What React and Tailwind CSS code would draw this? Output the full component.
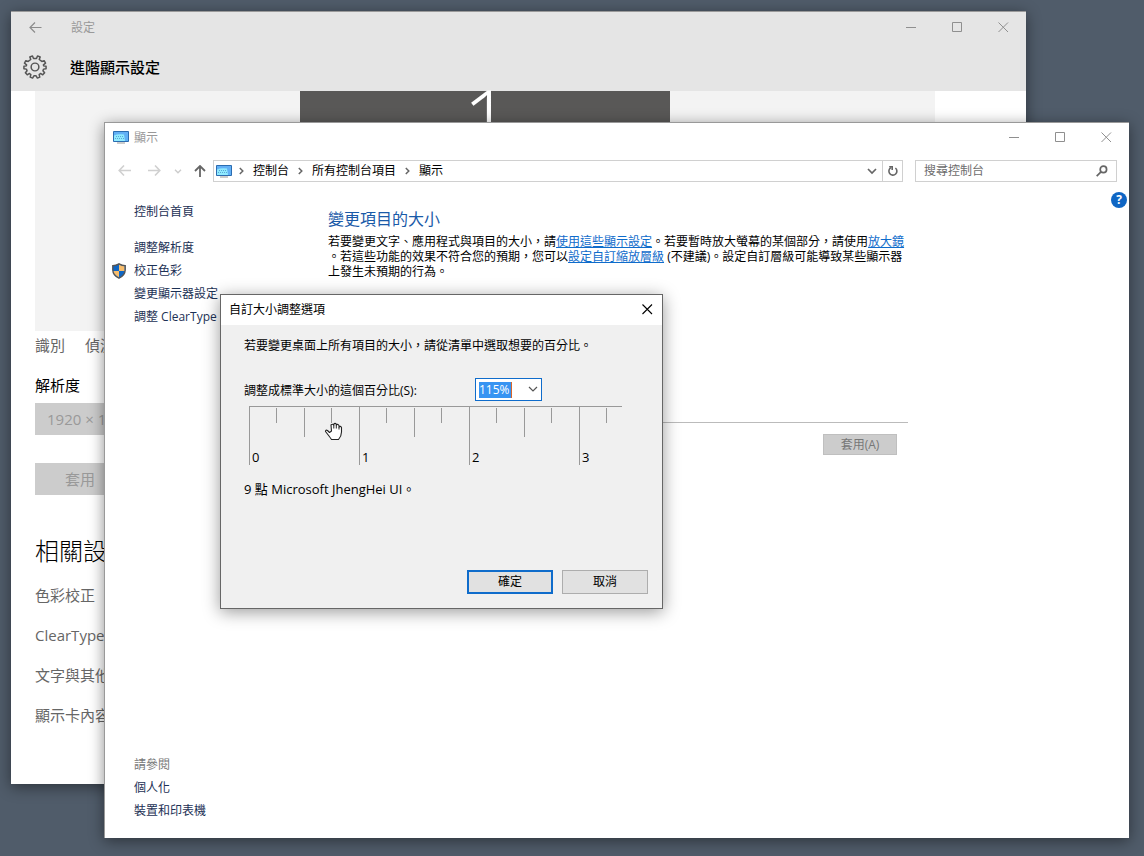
import React, { useState } from "react";

const relatedLinks = ["色彩校正", "ClearType 文字", "文字與其他項目大小調整的進階選項", "顯示卡內容"];

const sideLinks = [
  { label: "調整解析度" },
  { label: "校正色彩", shield: true },
  { label: "變更顯示器設定" },
  { label: "調整 ClearType 文字" },
];

const crumbs = ["控制台", "所有控制台項目", "顯示"];

const WindowButton = ({ kind, label }) => (
  <button aria-label={label} className="flex h-full w-[46px] items-center justify-center text-[#8f8f8f]">
    <svg width="11" height="11" viewBox="0 0 11 11" fill="none" stroke="currentColor" strokeWidth="1">
      {kind === "min" && <path d="M0 5.5H10" />}
      {kind === "max" && <path d="M.5 .5H9.5V9.5H.5Z" />}
      {kind === "close" && <path d="M.5 .5L10 10M10 .5L.5 10" />}
    </svg>
  </button>
);

const WindowControls = () => (
  <div className="ml-auto flex h-full">
    <WindowButton kind="min" label="最小化" />
    <WindowButton kind="max" label="最大化" />
    <WindowButton kind="close" label="關閉" />
  </div>
);

const GearIcon = () => (
  <svg width="24" height="24" viewBox="-13 -13 26 26" fill="none" stroke="#555" strokeWidth="1.6" strokeLinejoin="round">
    <circle r="4.2" />
    <path d="M-1.6 -9.3L-2.7 -12L-5.6 -10.8L-4.6 -8.1L-7.4 -6L-9.9 -6.9L-11.4 -4.1L-9.1 -2.4L-9.4 -1.2L-12 -.8V2L-9.3 2.3L-8.6 4L-10.4 6.2L-8.4 8.5L-6 7L-4.5 8.3L-5.2 11L-2.6 12L-1.2 9.6H1.2L2.6 12L5.2 11L4.5 8.3L6 7L8.4 8.5L10.4 6.2L8.6 4L9.3 2.3L12 2V-.8L9.4 -1.2L9.1 -2.4L11.4 -4.1L9.9 -6.9L7.4 -6L4.6 -8.1L5.6 -10.8L2.7 -12L1.6 -9.3Z" />
  </svg>
);

const MonitorIcon = () => (
  <svg width="16" height="13" viewBox="0 0 16 13" className="shrink-0">
    <path d="M.5 .5H15.5V10.5H.5Z" fill="#62b0f5" stroke="#2b6cb0" />
    <path d="M1 4.5Q5 2.5 11 3.5L12 10H1Z" fill="#8feaff" />
    <path d="M3 5.5H11M2 7.5H11" stroke="#5aa9d6" strokeDasharray="1 1" />
    <path d="M4 12H12" stroke="#999" />
  </svg>
);

const ShieldIcon = () => (
  <svg width="14" height="16" viewBox="0 0 14 16">
    <path d="M7 .8Q4 2.6 .8 2.6V7Q1 12.5 7 15.2Q13 12.5 13.2 7V2.6Q10 2.6 7 .8Z" fill="#0f66c4" stroke="#555" strokeWidth="1.4" />
    <path d="M7 1.8Q10 3.3 12.4 3.3V8H7Z" fill="#f9bd6b" />
    <path d="M1.6 8H7V14.2Q2.3 12 1.6 8Z" fill="#f9bd6b" />
  </svg>
);

const ChevronRight = () => (
  <svg width="5" height="8" viewBox="0 0 5 8" fill="none" stroke="#666" strokeWidth="1.5">
    <path d="M.8 1L3.8 4L.8 7" />
  </svg>
);

const ChevronDown = ({ strokeWidth }) => (
  <svg width="10" height="7" viewBox="0 0 10 7" fill="none" stroke="currentColor" strokeWidth={strokeWidth}>
    <path d="M1 1L5 5L9 1" />
  </svg>
);

const HandCursor = () => (
  <svg width="20" height="19" viewBox="0 0 20 19" className="pointer-events-none absolute top-4 left-20">
    <path
      d="M5.5 10.5L3.5 8.5Q1.5 7.5 1.5 9.5L5 14Q6.5 16 7.5 17.5H14.5Q17.5 14 17.5 10V5.5Q16.5 3.5 15 5V3.5Q13.5 1.5 12.3 3V2.2Q11 .6 9.8 2.2V3Q8.5 1.5 7 3L7.5 9Z"
      fill="#fff"
      stroke="#222"
      strokeWidth="1.1"
      strokeLinejoin="round"
    />
    <path d="M9.8 3V6.5M12.3 3V6.5M15 5V7.5" stroke="#222" />
  </svg>
);

const SettingsWindow = () => (
  <section className="absolute top-[11px] right-[118px] bottom-[72px] left-[11px] flex flex-col overflow-hidden border-t border-[#9a9a9a] bg-white text-[15px] text-[#666] shadow-[0_3px_14px_rgba(0,0,0,0.45)]">
    <header className="shrink-0 bg-[#e5e5e5]">
      <div className="flex h-[31px] items-center">
        <button aria-label="上一頁" className="flex w-12 justify-center text-[#8c8c8c]">
          <svg width="13" height="12" viewBox="0 0 13 12" fill="none" stroke="currentColor" strokeWidth="1.2">
            <path d="M12.5 5.5H1M6 .5L1 5.5L6 10.5" />
          </svg>
        </button>
        <span className="ml-3 text-xs text-[#999]">設定</span>
        <WindowControls />
      </div>
      <div className="flex h-12 items-center">
        <span className="flex w-12 justify-center"><GearIcon /></span>
        <h1 className="ml-[11px] text-[15px] font-medium text-black">進階顯示設定</h1>
      </div>
    </header>
    <div className="min-h-0 flex-1 px-6">
      <div className="h-60 w-full max-w-[900px] bg-[#f3f3f3]">
        <div className="mx-auto h-52 w-[370px] bg-[#595857] pl-1 text-center text-[84px] leading-[56px] font-light text-white">1</div>
      </div>
      <div className="flex h-7 items-center gap-5">
        <a href="#identify">識別</a>
        <a href="#detect">偵測</a>
      </div>
      <label htmlFor="resolution" className="mt-4 block h-5 leading-5 text-black">解析度</label>
      <select id="resolution" disabled className="mt-2 block h-8 w-[280px] appearance-none bg-[#ccc] px-3 text-[#999] opacity-100">
        <option>1920 × 1080</option>
      </select>
      <button disabled className="mt-7 block h-8 w-[90px] bg-[#ccc] text-[#999]">套用</button>
      <h2 className="mt-10 h-8 text-2xl leading-8 font-light text-black">相關設定</h2>
      <ul className="mt-2">
        {relatedLinks.map((link) => (
          <li key={link} className="h-10 leading-10 whitespace-nowrap">
            <a href="#related">{link}</a>
          </li>
        ))}
      </ul>
    </div>
  </section>
);

const ControlPanelWindow = () => (
  <section className="absolute top-[122px] right-[15px] bottom-[18px] left-[104px] flex flex-col border-t border-l border-[#999] bg-white text-xs text-black shadow-[0_3px_14px_rgba(0,0,0,0.45)]">
    <header className="flex h-[29px] shrink-0 items-center pl-2">
      <MonitorIcon />
      <span className="ml-[5px] text-[#999]">顯示</span>
      <WindowControls />
    </header>
    <div className="mt-2 flex h-[22px] shrink-0 items-center pr-3">
      <div className="flex h-full w-[108px] items-center pl-[13px]">
        <button aria-label="上一頁" className="text-[#d0d0d0]">
          <svg width="13" height="12" viewBox="0 0 13 12" fill="none" stroke="currentColor" strokeWidth="1.6">
            <path d="M13 5.5H1.5M6 .5L1.2 5.5L6 10.5" />
          </svg>
        </button>
        <button aria-label="下一頁" className="ml-[17px] text-[#d0d0d0]">
          <svg width="13" height="12" viewBox="0 0 13 12" fill="none" stroke="currentColor" strokeWidth="1.6">
            <path d="M0 5.5H11.5M7 .5L11.8 5.5L7 10.5" />
          </svg>
        </button>
        <button aria-label="最近的位置" className="ml-[13px] text-[#ccc]">
          <svg width="8" height="5" viewBox="0 0 8 5" fill="none" stroke="currentColor" strokeWidth="1.4">
            <path d="M1 .8L4 3.8L7 .8" />
          </svg>
        </button>
        <button aria-label="上移" className="ml-3 text-[#666]">
          <svg width="12" height="13" viewBox="0 0 12 13" fill="none" stroke="currentColor" strokeWidth="1.8">
            <path d="M6 12V1.5M1 6L6 1L11 6" />
          </svg>
        </button>
      </div>
      <div className="flex h-full flex-1 items-center border border-[#d0d0d0] pl-[2px]">
        <MonitorIcon />
        <nav aria-label="位址" className="ml-[7px] flex gap-[9px]">
          {crumbs.map((crumb) => (
            <span key={crumb} className="flex items-center whitespace-nowrap">
              <span className="w-3.5"><ChevronRight /></span>
              <a href="#crumb">{crumb}</a>
            </span>
          ))}
        </nav>
        <button aria-label="展開位址" className="ml-auto flex h-full w-5 items-center justify-center text-[#666]">
          <ChevronDown strokeWidth="1.7" />
        </button>
        <button aria-label="重新整理" className="flex h-full w-5 items-center justify-center border-l border-[#d0d0d0] text-[#666]">
          <svg width="12" height="12" viewBox="0 0 12 12" fill="none" stroke="currentColor" strokeWidth="1.6">
            <path d="M8.4 3A4 4 0 1 1 4 2.6" />
            <path d="M2.2 1.8H5.2V5" />
          </svg>
        </button>
      </div>
      <div className="ml-3 flex h-full w-[202px] items-center border border-[#d0d0d0] pr-2 pl-2">
        <input aria-label="搜尋控制台" placeholder="搜尋控制台" className="min-w-0 flex-1 outline-none placeholder:text-[#6d6d6d]" />
        <svg width="12" height="12" viewBox="0 0 12 12" fill="none" stroke="#666" strokeWidth="1.7">
          <circle cx="7.4" cy="4.4" r="3.2" />
          <path d="M5 6.8L.7 11.2" />
        </svg>
      </div>
    </div>
    <div className="flex min-h-0 flex-1">
      <nav className="flex w-[223px] shrink-0 flex-col pt-[18px] pb-4 text-[#1c3155]">
        <a href="#home" className="ml-[29px] h-[23px] leading-[23px]">控制台首頁</a>
        <ul className="mt-[13px]">
          {sideLinks.map((link) => (
            <li key={link.label} className="flex h-[23px] items-center whitespace-nowrap">
              <span className="flex w-[29px] pl-[7px]">{link.shield && <ShieldIcon />}</span>
              <a href="#task">{link.label}</a>
            </li>
          ))}
        </ul>
        <div className="mt-auto ml-[29px] leading-[23px]">
          <p className="text-[#777]">請參閱</p>
          <a href="#personalize" className="block">個人化</a>
          <a href="#devices" className="block">裝置和印表機</a>
        </div>
      </nav>
      <main className="w-full max-w-[580px] pt-[25px]">
        <h2 className="h-6 text-base leading-6 text-[#1a5aa8]">變更項目的大小</h2>
        <p className="mt-[3px] leading-[15px] whitespace-nowrap">
          若要變更文字、應用程式與項目的大小，請<a href="#settings" className="text-[#0f6ccb] underline">使用這些顯示設定</a>。若要暫時放大螢幕的某個部分，請使用<a href="#magnifier" className="text-[#0f6ccb] underline">放大鏡</a>
          <br />
          。若這些功能的效果不符合您的預期，您可以<a href="#scaling" className="text-[#0f6ccb] underline">設定自訂縮放層級</a> (不建議)。設定自訂層級可能導致某些顯示器
          <br />
          上發生未預期的行為。
        </p>
        <hr className="mt-[143px] border-[#bbb]" />
        <button disabled className="mt-[11px] mr-[11px] ml-auto block h-[21px] w-[74px] border border-[#bfbfbf] bg-[#ccc] leading-[19px] text-[#777]">套用(A)</button>
      </main>
      <button aria-label="說明" className="mt-2.5 mr-0.5 ml-auto h-4 w-4 shrink-0 rounded-full bg-[#0f66c4] text-center leading-4 font-bold text-white">?</button>
    </div>
  </section>
);

const Ruler = () => (
  <div className="ml-[5px] h-[60px] w-[373px] overflow-hidden border-t border-[#999]">
    <div className="flex h-full">
      {[0, 1, 2, 3].map((n) => (
        <div key={n} className="flex h-full w-[110px] shrink-0 items-start">
          <div className="flex h-[58px] w-[27px] items-end border-l border-[#999] pl-0.5 text-[13px] leading-4">{n}</div>
          <div className="mt-px h-[15px] w-7 border-l border-[#999]" />
          <div className="mt-px h-[29px] w-[27px] border-l border-[#999]" />
          <div className="mt-px h-[15px] w-7 border-l border-[#999]" />
        </div>
      ))}
    </div>
  </div>
);

const ScalingDialog = () => {
  const [scale, setScale] = useState("115%");

  return (
    <section role="dialog" aria-label="自訂大小調整選項" className="absolute top-[294px] left-[220px] w-[443px] border border-[#666] bg-[#f0f0f0] text-xs text-black shadow-[0_3px_16px_rgba(0,0,0,0.4)]">
      <header className="flex h-[30px] items-center bg-white pl-2">
        <h2>自訂大小調整選項</h2>
        <button aria-label="關閉" className="ml-auto flex h-full w-[30px] items-center justify-center pb-0.5">
          <svg width="11" height="11" viewBox="0 0 11 11" fill="none" stroke="#000" strokeWidth="1.1">
            <path d="M.5 .5L10 10M10 .5L.5 10" />
          </svg>
        </button>
      </header>
      <div className="px-[14px] pb-[14px]">
        <p className="ml-[9px] pt-[13px] leading-4">若要變更桌面上所有項目的大小，請從清單中選取想要的百分比。</p>
        <div className="mt-6 ml-[9px] flex h-[23px] items-center">
          <label htmlFor="scale" className="w-[231px] pt-0.5">調整成標準大小的這個百分比(S):</label>
          <div className="flex h-[23px] w-[67px] items-center border border-[#0f6ccb] bg-white pl-[3px]">
            <input
              id="scale"
              value={scale}
              onChange={(e) => setScale(e.target.value)}
              className="h-4 w-[33px] border-r border-[#d9662b] bg-[#3794f2] leading-4 text-white outline-none"
            />
            <button aria-label="選取百分比" className="ml-auto flex h-full w-[17px] items-center justify-center text-[#555]">
              <ChevronDown strokeWidth="1.2" />
            </button>
          </div>
        </div>
        <div className="relative mt-[5px] ml-[9px]">
          <Ruler />
          <HandCursor />
        </div>
        <p className="mt-[15px] ml-[9px] text-[13px] leading-4">9 點 Microsoft JhengHei UI。</p>
        <div className="mt-[73px] flex justify-end gap-[9px]">
          <button className="h-6 w-[86px] border-2 border-[#0f6ccb] bg-[#e1e1e1]">確定</button>
          <button className="h-6 w-[86px] border border-[#adadad] bg-[#e1e1e1]">取消</button>
        </div>
      </div>
    </section>
  );
};

export default function App() {
  return (
    <div lang="zh-Hant" className="relative h-screen w-full overflow-hidden bg-[#505c6a] font-['Open_Sans','Noto_Sans_CJK_TC',sans-serif]">
      <SettingsWindow />
      <ControlPanelWindow />
      <ScalingDialog />
    </div>
  );
}
